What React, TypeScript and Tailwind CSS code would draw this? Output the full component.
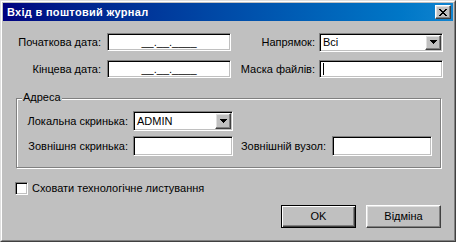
const sunken =
  'border border-t-[#808080] border-l-[#808080] border-r-white border-b-white shadow-[inset_1px_1px_0_#000,inset_-1px_-1px_0_#c0c0c0] bg-white'
const raised =
  'border border-t-white border-l-white border-r-[#404040] border-b-[#404040] shadow-[inset_-1px_-1px_0_#808080,inset_1px_1px_0_#dfdfdf] bg-[#c0c0c0]'

function CloseGlyph() {
  const rows = ['11000011', '01100110', '00111100', '00011000', '00111100', '01100110', '11000011']
  return (
    <svg width="8" height="7" viewBox="0 0 8 7" shapeRendering="crispEdges">
      {rows.map((r, y) =>
        r.split('').map((c, x) => (c === '1' ? <rect key={`${x}-${y}`} x={x} y={y} width="1" height="1" fill="#000" /> : null))
      )}
    </svg>
  )
}

function Arrow() {
  return (
    <svg width="7" height="4" viewBox="0 0 7 4" shapeRendering="crispEdges">
      <rect x="0" y="0" width="7" height="1" fill="#000" />
      <rect x="1" y="1" width="5" height="1" fill="#000" />
      <rect x="2" y="2" width="3" height="1" fill="#000" />
      <rect x="3" y="3" width="1" height="1" fill="#000" />
    </svg>
  )
}

function Combo({ value, width, height }: { value: string; width: string; height: string }) {
  return (
    <div className={`${sunken} ${width} ${height} flex items-stretch p-[1px]`}>
      <div className="flex-1 flex items-center pl-[2px] leading-none">{value}</div>
      <div className={`${raised} w-[16px] flex items-center justify-center`}>
        <Arrow />
      </div>
    </div>
  )
}

function TextBox({ width, height, children }: { width: string; height: string; children?: React.ReactNode }) {
  return <div className={`${sunken} ${width} ${height} flex items-center`}>{children}</div>
}

export default function App() {
  return (
    <div className="w-[456px] h-[242px] bg-[#c0c0c0] border border-t-[#dfdfdf] border-l-[#dfdfdf] border-r-[#404040] border-b-[#404040] font-['Liberation_Sans',Arial,sans-serif] text-[11px] text-black select-none">
      <div className="h-full border border-t-white border-l-white border-r-[#808080] border-b-[#808080] p-px flex flex-col">
        {/* title bar */}
        <div className="h-[18px] shrink-0 flex items-center justify-between bg-gradient-to-r from-[#000080] to-[#1084d0]">
          <span className="ml-[4px] text-white font-bold text-[11px] tracking-[0.3px]">Вхід в поштовий журнал</span>
          <div className={`${raised} w-[16px] h-[14px] mr-[2px] flex items-center justify-center`}>
            <CloseGlyph />
          </div>
        </div>

        <div className="flex flex-col">
          {/* dates / direction */}
          <div className="mt-[12px] h-[18px] flex items-center">
            <span className="w-[98px] text-right">Початкова дата:</span>
            <TextBox width="w-[124px] ml-[6px]" height="h-[18px]">
              <span className="w-full text-center">__.__.____</span>
            </TextBox>
            <span className="w-[84px] text-right">Напрямок:</span>
            <div className="ml-[4px]">
              <Combo value="Всі" width="w-[124px]" height="h-[19px]" />
            </div>
          </div>
          <div className="mt-[9px] h-[18px] flex items-center">
            <span className="w-[98px] text-right">Кінцева дата:</span>
            <TextBox width="w-[124px] ml-[6px]" height="h-[18px]">
              <span className="w-full text-center">__.__.____</span>
            </TextBox>
            <span className="w-[84px] text-right">Маска файлів:</span>
            <TextBox width="w-[124px] ml-[4px]" height="h-[18px]">
              <span className="ml-[3px] w-px h-[12px] bg-black" />
            </TextBox>
          </div>

          {/* group */}
          <div className="relative mt-[20px] ml-[13px] w-[425px] h-[70px] border border-[#808080] shadow-[inset_1px_1px_0_#fff,1px_1px_0_#fff] pt-[12px]">
            <span className="absolute left-[5px] top-[-8px] px-px leading-[13px] bg-[#c0c0c0]">Адреса</span>
            <div className="h-[20px] flex items-center">
              <span className="w-[111px] text-right">Локальна скринька:</span>
              <div className="ml-[5px]">
                <Combo value="ADMIN" width="w-[100px]" height="h-[20px]" />
              </div>
            </div>
            <div className="mt-[5px] h-[20px] flex items-center">
              <span className="w-[111px] text-right">Зовнішня скринька:</span>
              <TextBox width="w-[100px] ml-[5px]" height="h-[20px]" />
              <span className="w-[93px] text-right">Зовнішній вузол:</span>
              <TextBox width="w-[100px] ml-[6px]" height="h-[20px]" />
            </div>
          </div>

          {/* checkbox */}
          <div className="mt-[14px] ml-[12px] h-[13px] flex items-center">
            <div className={`${sunken} w-[13px] h-[13px]`} />
            <span className="ml-[4px]">Сховати технологічне листування</span>
          </div>

          {/* buttons */}
          <div className="mt-[10px] mr-[12px] flex justify-end gap-[10px]">
            <button className="w-[75px] h-[23px] border border-black shadow-[inset_1px_1px_0_#fff,inset_-1px_-1px_0_#404040,inset_-2px_-2px_0_#808080] bg-[#c0c0c0] text-[11px]">
              OK
            </button>
            <button className={`${raised} w-[75px] h-[23px] text-[11px]`}>Відміна</button>
          </div>
        </div>
      </div>
    </div>
  )
}
